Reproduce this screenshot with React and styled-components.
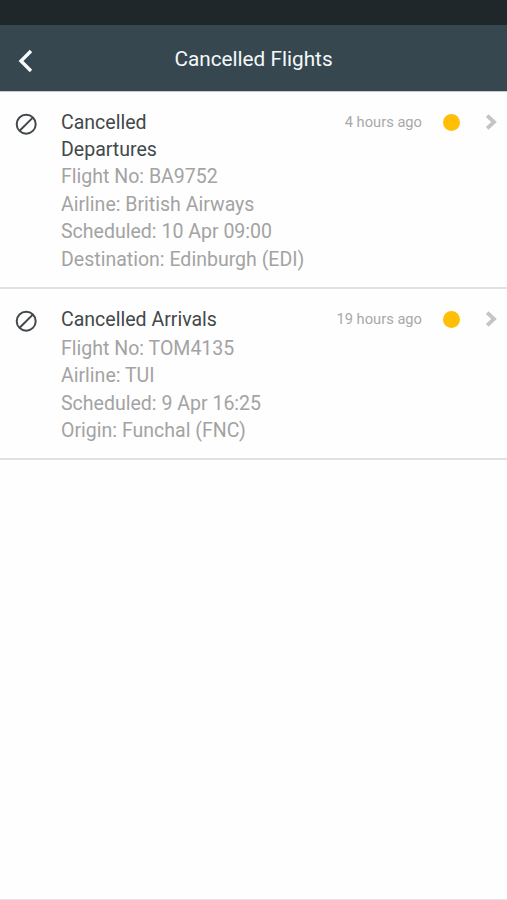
import styled, { createGlobalStyle } from "styled-components";

const GlobalStyle = createGlobalStyle`
    body {
        margin: 0;
        background-color: #fefefe;
        font-family: Roboto, sans-serif;
    }
`

const Screen = styled.main`
    box-sizing: border-box;
    height: 900px;
    display: flex;
    flex-direction: column;
    border-bottom: 1px solid #e4e4e4;
    overflow: hidden;
`

const StatusBar = styled.div`
    height: 25px;
    flex: none;
    background-color: #1f272a;
`

const Header = styled.header`
    box-sizing: border-box;
    height: 66px;
    flex: none;
    display: grid;
    grid-template-columns: 60px 1fr 60px;
    align-items: center;
    padding-top: 3px;
    background-color: #37474f;
    box-shadow: 0 1px 0 #c3c8ca;
`

const BackBtn = styled.button`
    display: flex;
    padding: 2px 0 0 18px;
    border: none;
    background: none;
    cursor: pointer;
`

const Title = styled.h1`
    margin: 0;
    padding-bottom: 2px;
    color: #f3f9fb;
    font-size: 20.75px;
    font-weight: 400;
    line-height: 28px;
    text-align: center;
`

const List = styled.ul`
    margin: 0;
    padding: 0;
    list-style: none;
`

const Item = styled.li`
    box-sizing: border-box;
    height: ${props => props.height}px;
    display: flex;
    align-items: flex-start;
    padding: ${props => props.top}px 8.5px 0 15px;
    border-bottom: 2px solid #e1e1e1;
    cursor: pointer;
`

const ItemIcon = styled.div`
    display: flex;
    width: 46px;
    flex: none;
    padding-top: 5px;
`

const ItemBody = styled.div`
    flex: 1;
`

const ItemHead = styled.div`
    display: flex;
    justify-content: space-between;
    margin-bottom: ${props => props.gap}px;
`

const ItemTitle = styled.h2`
    width: ${props => props.width}px;
    margin: 0;
    padding-top: 0.8px;
    color: #43484a;
    font-size: 19.55px;
    font-weight: 400;
    line-height: 27.35px;
`

const ItemLine = styled.p`
    margin: 0;
    color: #a3a3a3;
    font-size: 19.55px;
    line-height: 27.35px;
    white-space: nowrap;
`

const ItemMeta = styled.div`
    height: 28px;
    display: flex;
    align-items: center;
`

const Time = styled.span`
    color: #a8a8a8;
    font-size: 14.7px;
    line-height: 26px;
`

const Dot = styled.span`
    width: 17px;
    height: 17px;
    margin: 0 20.5px 0 21px;
    border-radius: 50%;
    background-color: #ffbf06;
`

const flights = [
    {
        id: 1,
        title: "Cancelled Departures",
        titleWidth: 120,
        top: 17,
        gap: 0,
        height: 198,
        time: "4 hours ago",
        lines: ["Flight No: BA9752", "Airline: British Airways", "Scheduled: 10 Apr 09:00", "Destination: Edinburgh (EDI)"],
    },
    {
        id: 2,
        title: "Cancelled Arrivals",
        titleWidth: 180,
        top: 16,
        gap: 1.7,
        height: 171,
        time: "19 hours ago",
        lines: ["Flight No: TOM4135", "Airline: TUI", "Scheduled: 9 Apr 16:25", "Origin: Funchal (FNC)"],
    },
]

function CancelledIcon () {
    return (
        <svg width="22" height="22" viewBox="0 0 22 22" fill="none" stroke="#43484a" strokeWidth="2">
            <circle cx="11.2" cy="11.2" r="9.5" />
            <path d="M4.6 17.8L17.8 4.6" />
        </svg>
    )
}

function App () {
    return (
        <Screen>
            <GlobalStyle />
            <StatusBar />
            <Header>
                <BackBtn aria-label="Back">
                    <svg width="15" height="24" viewBox="0 0 15 24" fill="none" stroke="#f5fafc" strokeWidth="3.4">
                        <path d="M13 2L3 12L13 22" />
                    </svg>
                </BackBtn>
                <Title>Cancelled Flights</Title>
            </Header>
            <List>
                {flights.map(i =>
                    <Item key={i.id} height={i.height} top={i.top}>
                        <ItemIcon><CancelledIcon /></ItemIcon>
                        <ItemBody>
                            <ItemHead gap={i.gap}>
                                <ItemTitle width={i.titleWidth}>{i.title}</ItemTitle>
                                <ItemMeta>
                                    <Time>{i.time}</Time>
                                    <Dot />
                                    <svg width="18" height="18" viewBox="0 0 18 18" fill="none" stroke="#c4c4c4" strokeWidth="3.8">
                                        <path d="M6.2 2.6L13 9L6.2 15.4" />
                                    </svg>
                                </ItemMeta>
                            </ItemHead>
                            {i.lines.map(line => <ItemLine key={line}>{line}</ItemLine>)}
                        </ItemBody>
                    </Item>)}
            </List>
        </Screen>
    )
}
export default App;
